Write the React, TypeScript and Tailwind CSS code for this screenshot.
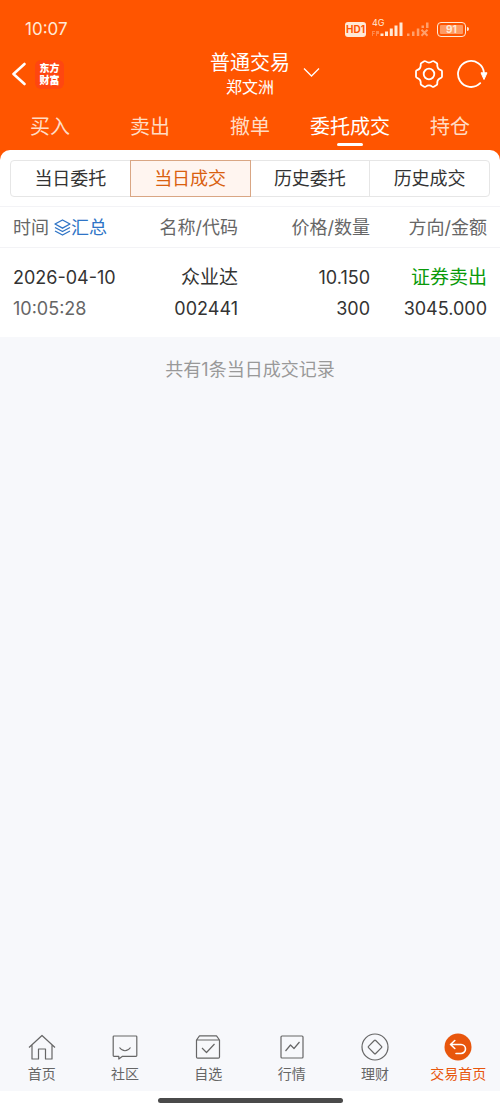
import React, { useState } from 'react';

const MAIN_TABS = ['买入', '卖出', '撤单', '委托成交', '持仓'];
const SUB_TABS = ['当日委托', '当日成交', '历史委托', '历史成交'];

const DEALS = [
  {
    date: '2026-04-10',
    time: '10:05:28',
    name: '众业达',
    code: '002441',
    price: '10.150',
    volume: '300',
    side: '证券卖出',
    amount: '3045.000',
  },
];

// Signal bars, the second SIM has no service
const SignalIcon = () => (
  <svg width="31" height="16" viewBox="0 0 31 16" fill="#ffe9d6" aria-hidden="true">
    <path d="M8.500 12.500h3V15h-3zM13 10.500h3V15h-3zM17.800 7.500h3V15h-3zM22.500 4.500h3V15h-3zM27.500 1.500h3V15h-3z" />
    <path d="M0 10h3v1H1v1h1.500v1H1v2H0zM4 10h3v3H5v2H4z" opacity=".35" />
  </svg>
);

const NoServiceIcon = () => (
  <svg width="22" height="16" viewBox="0 0 22 16" fill="#ffe9d6" opacity=".5" aria-hidden="true">
    <path d="M0 12.500h2.500V15H0zM5 10.500h2.500V15H5zM9.800 7.500h2.500V15H9.800zM14.500 4.500H17V7h-2.500zM19 1.500h2.500V7H19z" />
    <path d="M14.500 8.800l6 6M20.500 8.800l-6 6" stroke="#ffe9d6" strokeWidth="2" />
  </svg>
);

const StatusBar = () => (
  <div className="flex h-[58px] items-center justify-between pr-[31px] pl-[25px] text-[#ffe9d6]">
    <span className="text-[17px] leading-6">10:07</span>
    <div className="flex items-center">
      <span className="flex h-[15px] w-[21px] items-center justify-center rounded-[3px] bg-[#ffe9d6] text-[10px] font-bold text-[#ff5500]">
        HD1
      </span>
      <span className="relative ml-[6px]">
        <SignalIcon />
        <span className="absolute -top-1 left-0 text-[9px] leading-3">4G</span>
      </span>
      <span className="ml-1">
        <NoServiceIcon />
      </span>
      <span className="ml-2 flex h-[15px] w-[29px] items-center rounded-[4px] border border-[#ffe9d6] p-0.5">
        <span className="flex h-full w-full items-center justify-center rounded-[1px] bg-[#ff9a62] text-[10px] leading-none font-bold text-[#ffe9d6]">
          91
        </span>
      </span>
      <span className="ml-px h-1 w-0.5 rounded-r bg-[#ffe9d6]" />
    </div>
  </div>
);

const GearIcon = () => (
  <svg width="28" height="28" viewBox="0 0 28 28" fill="none" stroke="#fff" strokeWidth="1.8" strokeLinejoin="round" aria-hidden="true">
    <path d="M9.200 1.200Q10 .8 10.800 1.400Q14 3.800 17.200 1.400Q18 .8 18.800 1.200L21.600 2.900Q22.400 3.400 22.300 4.400Q21.900 8.800 26 10.200Q27 10.500 27 11.500V16.500Q27 17.500 26 17.800Q21.900 19.200 22.300 23.600Q22.400 24.600 21.600 25.100L18.800 26.800Q18 27.200 17.200 26.600Q14 24.200 10.800 26.600Q10 27.200 9.200 26.800L6.400 25.100Q5.600 24.600 5.700 23.600Q6.100 19.200 2 17.800Q1 17.500 1 16.500V11.500Q1 10.500 2 10.200Q6.100 8.800 5.700 4.400Q5.600 3.400 6.400 2.900Z" />
    <circle cx="14" cy="14" r="5.300" />
  </svg>
);

const RefreshIcon = () => (
  <svg width="31" height="28" viewBox="0 0 31 28" fill="none" stroke="#fff" strokeWidth="1.800" aria-hidden="true">
    <path d="M23.200 23.200A13 13 0 1 1 27 13" strokeLinecap="round" />
    <path d="M24 12.800h6L27 19.500z" fill="#fff" strokeWidth="1" strokeLinejoin="round" />
  </svg>
);

const TitleBar = () => (
  <div className="-mt-2 flex h-[48px] items-center justify-between px-3">
    <div className="flex flex-1 items-center">
      <button type="button" aria-label="返回">
        <svg width="14" height="24" viewBox="1 0 14 24" fill="none" stroke="#fff" strokeWidth="2.600" strokeLinecap="round" strokeLinejoin="round">
          <path d="M13.500 2L2.500 12l11 10" />
        </svg>
      </button>
      <div className="ml-[9px] flex size-[29px] flex-col items-center justify-center rounded-md bg-[#ff4610] text-[10px] leading-[12px] font-black text-white">
        <span>东方</span>
        <span>财富</span>
      </div>
    </div>
    <button type="button" className="relative text-center text-white">
      <span className="block text-[20px] leading-[26px]">普通交易</span>
      <span className="block text-[16px] leading-[22px]">郑文洲</span>
      <svg className="absolute top-[17px] left-full ml-[13px]" width="17" height="11" viewBox="0 0 17 11" fill="none" stroke="#fff" strokeWidth="1.300" aria-hidden="true">
        <path d="M1 1.500l7.500 7.500L16 1.500" />
      </svg>
    </button>
    <div className="flex flex-1 items-center justify-end gap-[14px]">
      <button type="button" aria-label="设置">
        <GearIcon />
      </button>
      <button type="button" aria-label="刷新">
        <RefreshIcon />
      </button>
    </div>
  </div>
);

const ICON_PROPS = {
  width: 28,
  height: 28,
  viewBox: '0 0 28 28',
  fill: 'none',
  stroke: '#666',
  strokeWidth: 1.2,
  strokeLinejoin: 'round' as const,
  'aria-hidden': true,
};

const NAV_ITEMS = [
  {
    label: '首页',
    icon: (
      <svg {...ICON_PROPS}>
        <path d="M1 14.500L14 2.500l13 12M4 12v14h6.500V16h7v10H24V12" />
      </svg>
    ),
  },
  {
    label: '社区',
    icon: (
      <svg {...ICON_PROPS}>
        <path d="M3 3h22q.8 0 .8.800V22.500q0 .8-.8.800H11.500L7.800 26v-2.700H3q-.8 0-.8-.8V3.800Q2.200 3 3 3z" />
        <path d="M8.500 14.500c3 4.300 8 4.300 11 0" />
      </svg>
    ),
  },
  {
    label: '自选',
    icon: (
      <svg {...ICON_PROPS}>
        <path d="M2.500 7L5.500 2.800h17l3 4.200v17q0 1.200-1.200 1.200H3.700q-1.200 0-1.200-1.200zM2.500 7h23" />
        <path d="M8 15l4.500 4.500 8-8.500" />
      </svg>
    ),
  },
  {
    label: '行情',
    icon: (
      <svg {...ICON_PROPS}>
        <rect x="3" y="3" width="22" height="22" rx="1" />
        <path d="M7.500 18l5-6 3.500 3.500 5.500-6.500" />
      </svg>
    ),
  },
  {
    label: '理财',
    icon: (
      <svg {...ICON_PROPS}>
        <circle cx="14" cy="14" r="13" />
        <path d="M13.300 7.500q.7-.7 1.400 0l5.800 5.800q.7.700 0 1.400l-5.800 5.800q-.7.700-1.400 0l-5.800-5.800q-.7-.7 0-1.400z" />
      </svg>
    ),
  },
  {
    label: '交易首页',
    active: true,
    icon: (
      <svg {...ICON_PROPS} stroke="#fff" strokeWidth={1.6} strokeLinecap="round">
        <circle cx="14" cy="14" r="13.500" fill="#e8560c" stroke="none" />
        <path d="M10.800 7.500L6.500 11.500l4.300 4M6.500 11.500H17a4.500 4.500 0 0 1 0 9h-5" />
      </svg>
    ),
  },
];

const DealTable = () => (
  <table className="w-full table-fixed bg-white text-right text-[#333]">
    <thead>
      <tr className="h-[41px] border-y border-[#f3f3f6] text-[18px] text-[#666]">
        <th className="w-[27%] pl-[13px] text-left font-normal">
          <div className="flex items-center">
            时间
            <button type="button" className="ml-[5px] flex items-center text-[#2f74c6]">
              <svg width="17" height="17" viewBox="0 0 17 17" fill="none" stroke="currentColor" strokeWidth="1.400" strokeLinejoin="round" aria-hidden="true">
                <path d="M8.500 1L16 5 8.500 9.200 1 5zM1 8.500l7.500 4L16 8.500M1 12l7.500 4 7.500-4" />
              </svg>
              汇总
            </button>
          </div>
        </th>
        <th className="w-[21%] pr-0.5 font-normal">名称/代码</th>
        <th className="w-[26%] font-normal">价格/数量</th>
        <th className="w-[26%] pr-[13px] font-normal">方向/金额</th>
      </tr>
    </thead>
    <tbody>
      {DEALS.map(deal => (
        <tr key={`${deal.code}-${deal.time}`} className="h-[89px] text-[18px] leading-[31px]">
          <td className="pt-0.5 pl-[13px] text-left">
            <div>{deal.date}</div>
            <div className="text-[#666]">{deal.time}</div>
          </td>
          <td className="pt-0.5 pr-0.5">
            <div className="text-[19px]">{deal.name}</div>
            <div>{deal.code}</div>
          </td>
          <td className="pt-0.5">
            <div>{deal.price}</div>
            <div>{deal.volume}</div>
          </td>
          <td className="pt-0.5 pr-[13px]">
            <div className="text-[19px] text-[#0a9a0a]">{deal.side}</div>
            <div>{deal.amount}</div>
          </td>
        </tr>
      ))}
    </tbody>
  </table>
);

const App: React.FC = () => {
  const [mainTab, setMainTab] = useState('委托成交');
  const [subTab, setSubTab] = useState('当日成交');

  return (
    <div className="flex min-h-screen flex-col bg-[#f7f8fb] font-['Inter','Noto_Sans_CJK_SC',sans-serif]">
      <header className="bg-[#ff5500]">
        <StatusBar />
        <TitleBar />
        <nav className="grid h-[52px] grid-cols-5">
          {MAIN_TABS.map(tab => (
            <button
              key={tab}
              type="button"
              onClick={() => setMainTab(tab)}
              className={`flex flex-col items-center pt-[15px] text-[20px] leading-[28px] ${
                tab === mainTab ? 'text-white' : 'text-[#ffdcc4]'
              }`}
            >
              {tab}
              {tab === mainTab && <span className="mt-0.5 h-[3px] w-[26px] rounded-full bg-white" />}
            </button>
          ))}
        </nav>
      </header>

      <main className="flex-1">
        <div className="bg-[#ff5500]">
          <div className="flex rounded-t-[10px] bg-white px-[10px] pt-[10px] pb-[9px]">
            {SUB_TABS.map(tab => (
              <button
                key={tab}
                type="button"
                onClick={() => setSubTab(tab)}
                className={`h-[37px] flex-1 border text-[18px] first:rounded-l-[4px] last:rounded-r-[4px] not-first:-ml-px ${
                  tab === subTab ? 'z-10 border-[#d9a684] bg-[#fff5f0] text-[#d9600f]' : 'border-[#e6e6e6] text-[#333]'
                }`}
              >
                {tab}
              </button>
            ))}
          </div>
        </div>
        <DealTable />
        <p className="pt-[19px] text-center text-[18px] leading-[28px] text-[#999]">共有1条当日成交记录</p>
      </main>

      <footer>
        <nav className="grid grid-cols-6 pb-[7px]">
          {NAV_ITEMS.map(item => (
            <button
              key={item.label}
              type="button"
              className={`flex flex-col items-center gap-[3px] text-[14px] leading-5 ${
                item.active ? 'text-[#e8560c]' : 'text-[#666]'
              }`}
            >
              {item.icon}
              {item.label}
            </button>
          ))}
        </nav>
        <div className="flex h-5 justify-center bg-white pt-[7px]">
          <div className="h-[5px] w-[37%] rounded-full bg-[#4a4a4a]" />
        </div>
      </footer>
    </div>
  );
};

export default App;
